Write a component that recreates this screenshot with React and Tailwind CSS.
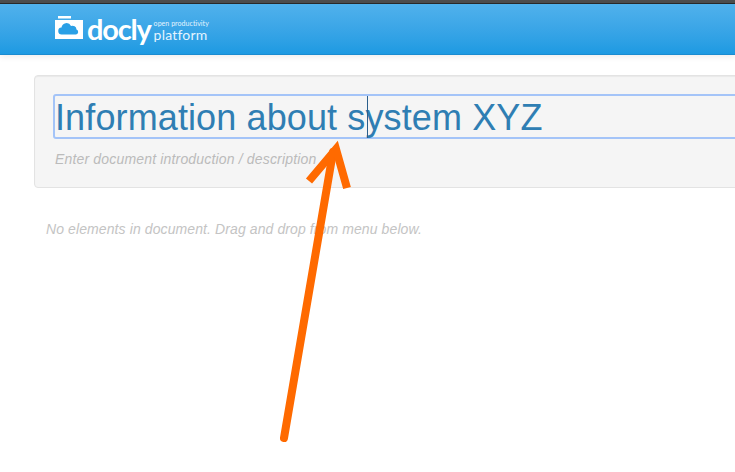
export default function App() {
  return (
    <div className="relative w-[735px] h-[472px] overflow-hidden bg-white" style={{ fontFamily: '"Liberation Sans", Arial, sans-serif' }}>
      <div className="h-[3px] bg-[#4d4d4d]" />
      <div className="h-px bg-[#2a2a2a]" />
      <header className="h-[51px] border-b border-[#1a8bd0] bg-gradient-to-b from-[#50b1ec] to-[#1c9ae2] shadow-[0_2px_6px_rgba(0,0,0,0.08)] pl-[55px] flex items-center">
        <svg width="28" height="23" viewBox="0 0 28 23" className="mt-[-3px]">
          <path d="M3 0h13v2.500h-13z M0 4h28v19h-28z" fill="#fff" />
          <path d="M7 18.500a3.500 3.500 0 0 1-.5-7a5 5 0 0 1 9.500-1.500a4 4 0 0 1 5.500 3.500a2.600 2.600 0 0 1-.5 5z" fill="#2aa0e6" />
        </svg>
        <span className="ml-[4px] mt-[-1px] text-[29px] leading-none font-bold tracking-[-1.200px] text-white" style={{ fontFamily: 'Lato, sans-serif' }}>docly</span>
        <div className="ml-[3px] mt-[2px] flex flex-col text-[#e4f4ff]" style={{ fontFamily: 'Lato, sans-serif' }}>
          <span className="text-[7px] leading-[10px] tracking-[0.05px]">open productivity</span>
          <span className="text-[14px] leading-[14px] tracking-[0.2px]">platform</span>
        </div>
      </header>

      <main className="pl-[34px] pt-5">
        <section className="w-[800px] h-[113px] rounded-[4px] border border-[#e3e3e3] bg-[#f5f5f5] pl-[18px] pt-[18px] shadow-[inset_0_1px_1px_rgba(0,0,0,0.05)]">
          <div className="relative h-[45px] rounded-[3px] border-2 border-[#a4c4f8] pl-0 text-[36px] leading-[43px] tracking-[0.12px] text-[#2f7eb3]">
            Information about system XYZ
            <span className="absolute left-[312px] top-0 h-[42px] w-px bg-[#2b5f8c]" />
          </div>
          <p className="mt-3 pl-[2px] text-[14px] leading-4 tracking-[0.17px] italic text-[#bbbbbb]">Enter document introduction / description</p>
        </section>
        <p className="mt-[33px] pl-3 text-[14px] leading-4 tracking-[0.1px] italic text-[#c4c4c4]">No elements in document. Drag and drop from menu below.</p>
      </main>

      <svg className="absolute left-0 top-0" width="735" height="472" viewBox="0 0 735 472" fill="none">
        <path d="M284 438L333 152" stroke="#ff6a00" strokeWidth="8" strokeLinecap="round" />
        <path d="M309 181L336 149L347 188" stroke="#ff6a00" strokeWidth="8" />
      </svg>
    </div>
  );
}
